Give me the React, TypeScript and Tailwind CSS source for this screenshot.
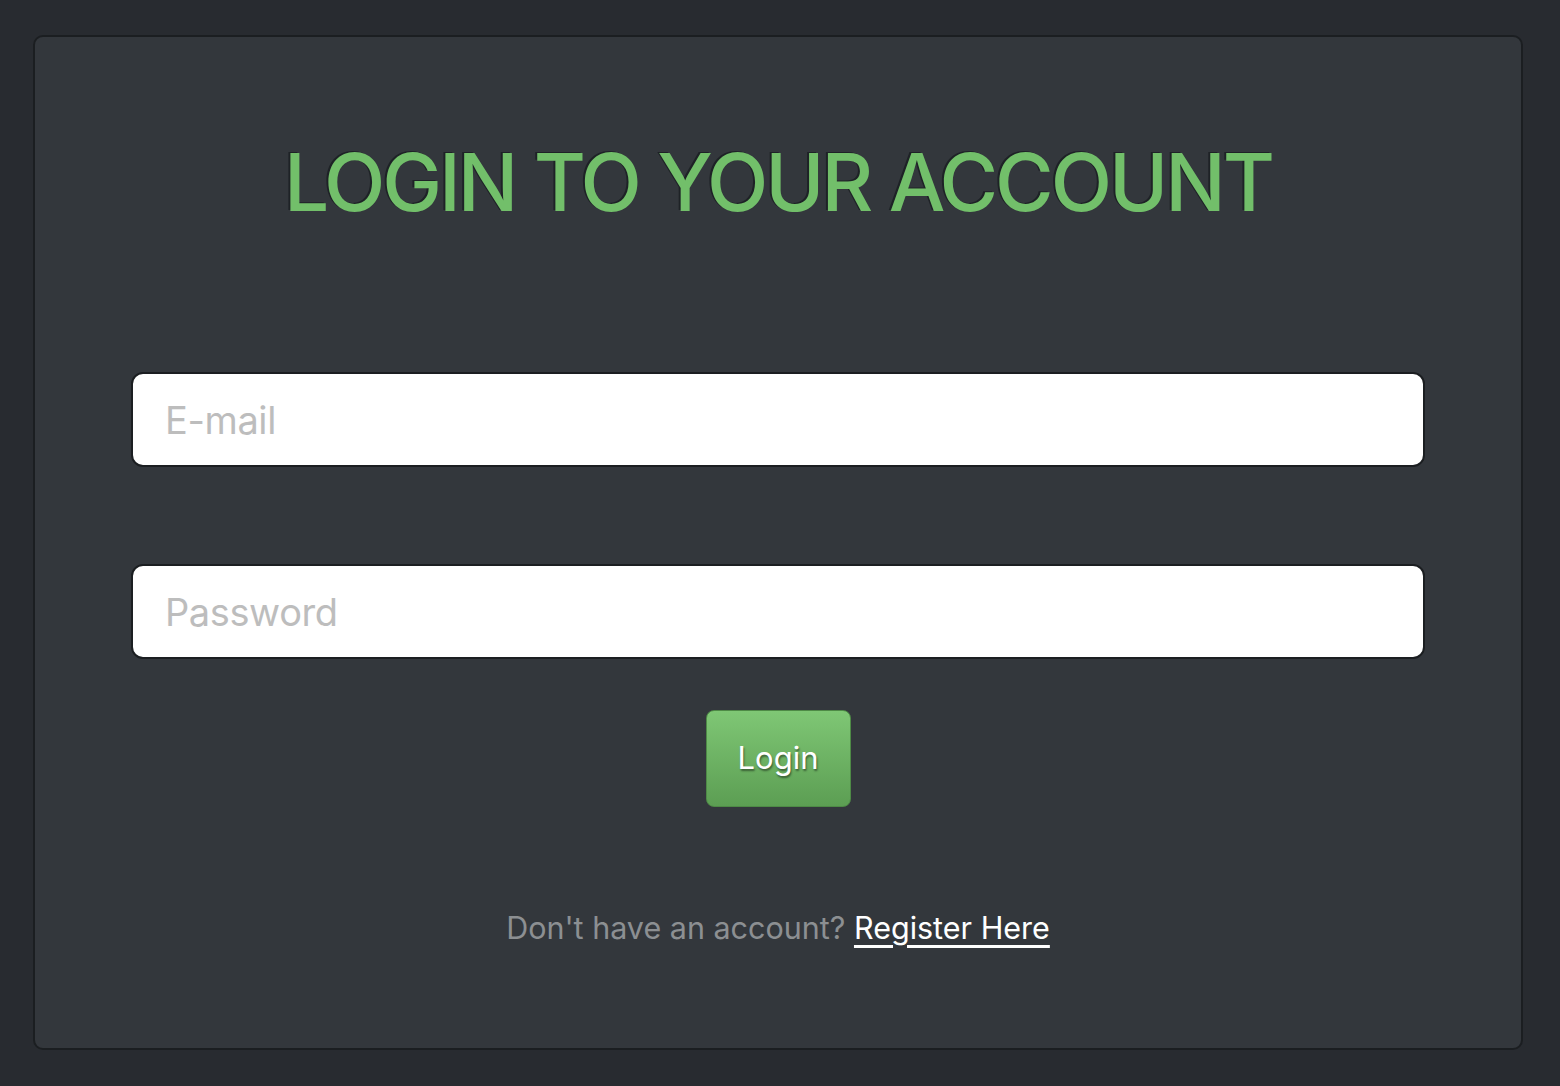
import React, { useState } from "react";

const LoginCard = () => {
  const [email, setEmail] = useState("");
  const [password, setPassword] = useState("");

  const handleSubmit = (e: React.FormEvent) => {
    e.preventDefault();
  };

  return (
    <div className="min-h-screen bg-[#282b30] pl-[33px] pr-[37px] pt-[35px] pb-[37px] font-['Inter',sans-serif]">
      <form
        onSubmit={handleSubmit}
        className="flex flex-col items-center rounded-[10px] border-2 border-[#1b1e21] bg-[#33373c] px-[96px] pt-[105px] pb-[104px]"
      >
        <h1 className="text-[80px] leading-none font-medium tracking-[-3px] text-[#72bf6a] [text-shadow:-2px_-1px_0_#1e2226]">
          LOGIN TO YOUR ACCOUNT
        </h1>

        <input
          type="email"
          placeholder="E-mail"
          value={email}
          onChange={(e) => setEmail(e.target.value)}
          className="mt-[150px] h-[95px] w-full rounded-[12px] border-2 border-[#1b1e21] bg-white px-[32px] text-[38px] tracking-[-0.4px] text-[#333] outline-none placeholder:text-[#bdbdbd]"
        />

        <input
          type="password"
          placeholder="Password"
          value={password}
          onChange={(e) => setPassword(e.target.value)}
          className="mt-[97px] h-[95px] w-full rounded-[12px] border-2 border-[#1b1e21] bg-white px-[32px] text-[38px] tracking-[-0.4px] text-[#333] outline-none placeholder:text-[#bdbdbd]"
        />

        <button
          type="submit"
          className="mt-[51px] h-[97px] w-[145px] rounded-[8px] border border-[#4e8a46] bg-gradient-to-b from-[#7fc775] to-[#5c9e53] text-[31px] text-white [text-shadow:1px_2px_2px_rgba(0,0,0,0.45)]"
        >
          Login
        </button>

        <p className="mt-[106px] text-[30.5px] leading-none text-[#8c8f92]">
          Don't have an account?{" "}
          <a href="#" className="text-white underline underline-offset-[6px] decoration-[3px]">
            Register Here
          </a>
        </p>
      </form>
    </div>
  );
};

export default function App() {
  return <LoginCard />;
}
